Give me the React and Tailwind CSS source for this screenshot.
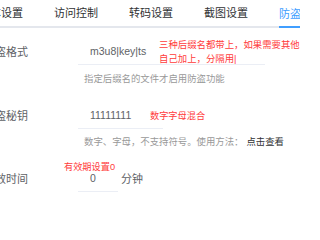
const tabs = ['基本设置', '访问控制', '转码设置', '截图设置', '防盗链设置'];

function Row({ label, children }) {
  return (
    <div className="flex items-center h-[25px]">
      <div className="w-[44px] shrink-0 text-right text-[11px] text-[#606266] whitespace-nowrap">{label}</div>
      <div className="ml-[50px] flex items-center h-full">{children}</div>
    </div>
  );
}

export default function App() {
  return (
    <div className="relative w-[300px] h-[200px] overflow-hidden bg-white font-['Liberation_Sans','Noto_Sans_CJK_SC',sans-serif]">
      <div className="h-[28px] border-b-2 border-[#e4e7ed]">
        <div className="flex h-[26px] gap-[31px] -ml-[21px] text-[11px] text-[#303133] whitespace-nowrap">
          {tabs.map((t, i) => (
            <div
              key={t}
              className={
                i === 4
                  ? 'flex items-center h-[28px] border-b-2 border-[#409eff] text-[#409eff] pt-[2px]'
                  : 'flex items-center h-full'
              }
            >
              {t}
            </div>
          ))}
        </div>
      </div>

      <div className="-ml-[16px] pt-[12px]">
        <Row label="防盗格式">
          <div className="w-[187px] h-[25px] border-b border-[#ebeef5] pl-[12px] flex items-center text-[10.5px] text-[#606266]">
            m3u8|key|ts
          </div>
        </Row>
        <div className="ml-[100px] mt-[7px] text-[9.4px] leading-[14px] text-[#999] whitespace-nowrap">
          指定后缀名的文件才启用防盗功能
        </div>

        <div className="mt-[18px]">
          <Row label="防盗秘钥">
            <div className="w-[85px] h-[25px] border-b border-[#ebeef5] pl-[12px] flex items-center text-[10.5px] text-[#606266]">
              11111111
            </div>
          </Row>
        </div>
        <div className="ml-[100px] mt-[6px] text-[9.4px] leading-[14px] text-[#999] whitespace-nowrap">
          数字、字母，不支持符号。使用方法：<span className="ml-[3px] text-[#303133]">点击查看</span>
        </div>

        <div className="mt-[18px]">
          <Row label="有效时间">
            <div className="w-[40px] h-[25px] border-b border-[#ebeef5] pl-[12px] flex items-center text-[10.5px] text-[#606266]">
              0
            </div>
            <span className="ml-[3px] text-[11px] text-[#606266]">分钟</span>
          </Row>
        </div>
      </div>

      <div className="absolute left-[159px] top-[38px] text-[9.4px] leading-[14px] text-[#ff3b3b] whitespace-nowrap">
        三种后缀名都带上，如果需要其他
        <br />
        自己加上，分隔用|
      </div>
      <div className="absolute left-[150px] top-[109px] text-[9.2px] leading-[14px] text-[#ff3b3b] whitespace-nowrap">
        数字字母混合
      </div>
      <div className="absolute left-[64px] top-[160px] text-[9.2px] leading-[14px] text-[#ff3b3b] whitespace-nowrap">
        有效期设置0
      </div>
    </div>
  );
}
